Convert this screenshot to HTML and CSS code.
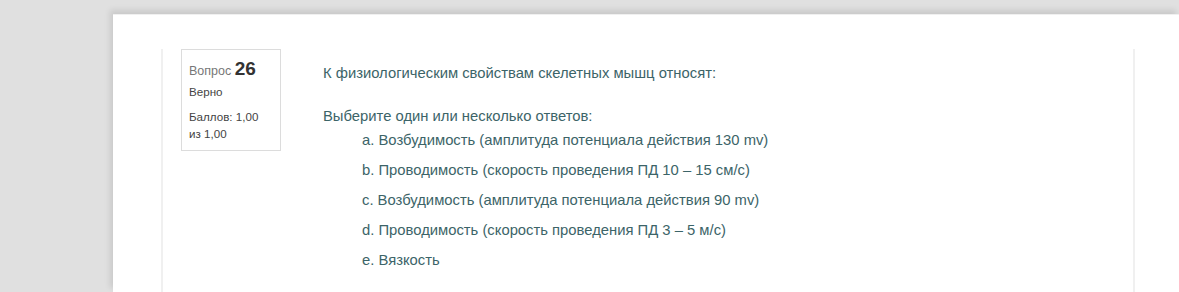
FILE: index.html
```html
<!DOCTYPE html>
<html lang="ru">
<head>
    <meta charset="UTF-8">
    <title>Вопрос 26</title>
    <link rel="stylesheet" href="styles.css">
</head>
<body>
    <div class="sheet">
        <div class="que">
            <div class="info">
                <div class="qno">Вопрос <b>26</b></div>
                <div class="state">Верно</div>
                <div class="grade">Баллов: 1,00<br>из 1,00</div>
            </div>
            <div class="content">
                <p class="qtext">К физиологическим свойствам скелетных мышц относят:</p>
                <p class="prompt">Выберите один или несколько ответов:</p>
                <ul class="answer">
                    <li>a. Возбудимость (амплитуда потенциала действия 130 mv)</li>
                    <li>b. Проводимость (скорость проведения ПД 10 – 15 см/с)</li>
                    <li>c. Возбудимость (амплитуда потенциала действия 90 mv)</li>
                    <li>d. Проводимость (скорость проведения ПД 3 – 5 м/с)</li>
                    <li>e. Вязкость</li>
                </ul>
            </div>
        </div>
    </div>
</body>
</html>
```

FILE: styles.css
```css
/* страница теста */
body {
    margin: 0;
    background-color: #e0e0e0;
    font-family: "Liberation Sans", Arial, sans-serif;
    height: 292px;
    overflow: hidden;
}

.sheet {
    margin: 14px 0 0 113px;
    height: 278px;
    background-color: #fff;
    border-top: 1px solid #f0f0f0;
    box-shadow: -3px -4px 6px rgba(0, 0, 0, 0.1);
    padding: 34px 0 0 48px;
    box-sizing: border-box;
}

.que {
    display: flex;
    width: 974px;
    height: 243px;
    border-left: 2px solid #f0f0f0;
    border-right: 2px solid #f0f0f0;
    box-sizing: border-box;
}

.info {
    margin-left: 18px;
    width: 100px;
    height: 102px;
    border: 1px solid #dcdcdc;
    box-sizing: border-box;
    padding: 8px 0 0 7px;
    font-size: 11.6px;
    color: #555;
    flex-shrink: 0;
}

.qno {
    font-size: 12.5px;
    color: #777;
}

.qno b {
    font-size: 19px;
    color: #333;
}

.state {
    margin-top: 5px;
    color: #444;
}

.grade {
    margin-top: 10px;
    line-height: 17px;
    color: #444;
}

.content {
    margin-left: 42px;
    padding-top: 14px;
    font-size: 14.8px;
    line-height: 20px;
    color: #3c6468;
}

.qtext {
    margin: 0;
}

.prompt {
    margin: 23px 0 0;
}

.answer {
    list-style: none;
    margin: 0;
    padding: 4px 0 0 39px;
}

.answer li {
    height: 30px;
}
```
